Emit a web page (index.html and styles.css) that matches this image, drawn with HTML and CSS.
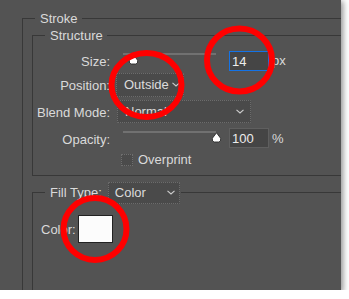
FILE: index.html
```html
<!DOCTYPE html>
<html>
<head>
<meta charset="utf-8">
<link rel="stylesheet" href="styles.css">
</head>
<body>
<div class="panel">
  <fieldset class="group stroke">
    <legend>Stroke</legend>
    <fieldset class="group structure">
      <legend>Structure</legend>
      <div class="row row-size">
        <span class="label">Size:</span>
        <div class="controls">
          <div class="slider">
            <div class="track"></div>
            <svg class="thumb" style="left:5px" width="11" height="11" viewBox="0 0 11 11"><path d="M5.5 0.8 L9.6 6.2 Q10.4 10 7.6 10 L3.4 10 Q0.6 10 1.4 6.2 Z" fill="#fff" stroke="#2a2a2a" stroke-width="0.9"/></svg>
          </div>
          <div class="num focus">14</div>
          <span class="unit">px</span>
        </div>
      </div>
      <div class="row row-pos">
        <span class="label">Position:</span>
        <div class="controls">
          <div class="select sel-pos">Outside<svg class="chev" width="8" height="5" viewBox="0 0 8 5"><path d="M0.5 0.8 L4 4 L7.5 0.8" fill="none" stroke="#cfcfcf" stroke-width="1.1"/></svg></div>
        </div>
      </div>
      <div class="row row-blend">
        <span class="label">Blend Mode:</span>
        <div class="controls">
          <div class="select sel-blend">Normal<svg class="chev" width="8" height="5" viewBox="0 0 8 5"><path d="M0.5 0.8 L4 4 L7.5 0.8" fill="none" stroke="#cfcfcf" stroke-width="1.1"/></svg></div>
        </div>
      </div>
      <div class="row row-opacity">
        <span class="label">Opacity:</span>
        <div class="controls">
          <div class="slider">
            <div class="track"></div>
            <svg class="thumb" style="left:88px" width="11" height="11" viewBox="0 0 11 11"><path d="M5.5 0.8 L9.6 6.2 Q10.4 10 7.6 10 L3.4 10 Q0.6 10 1.4 6.2 Z" fill="#fff" stroke="#2a2a2a" stroke-width="0.9"/></svg>
          </div>
          <div class="num">100</div>
          <span class="unit">%</span>
        </div>
      </div>
      <div class="row row-over">
        <span class="label"></span>
        <div class="controls">
          <span class="check"></span>
          <span class="check-text">Overprint</span>
        </div>
      </div>
    </fieldset>
    <fieldset class="group fill">
      <legend class="fill-legend">
        <span>Fill Type:</span>
        <span class="select sel-fill">Color<svg class="chev" width="8" height="5" viewBox="0 0 8 5"><path d="M0.5 0.8 L4 4 L7.5 0.8" fill="none" stroke="#cfcfcf" stroke-width="1.1"/></svg></span>
      </legend>
      <div class="color-row">
        <span class="color-label">Color:</span>
        <span class="swatch"></span>
      </div>
    </fieldset>
  </fieldset>
  <svg class="annot" width="341" height="290" viewBox="0 0 341 290">
    <ellipse cx="146.5" cy="85" rx="35" ry="32" fill="none" stroke="#ff0000" stroke-width="6"/>
    <ellipse cx="239.5" cy="60" rx="32.5" ry="31.5" fill="none" stroke="#ff0000" stroke-width="6"/>
    <ellipse cx="95" cy="229" rx="31.5" ry="31" fill="none" stroke="#ff0000" stroke-width="6"/>
  </svg>
</div>
</body>
</html>
```

FILE: styles.css
```css
html, body {
  margin: 0;
  padding: 0;
  background: #ffffff;
}

.panel {
  position: relative;
  width: 341px;
  height: 290px;
  background: #535353;
  overflow: hidden;
  box-shadow: 1px 2px 6px 1px rgba(0, 0, 0, 0.45);
  font-family: "Liberation Sans", Arial, sans-serif;
  font-size: 13px;
  line-height: 15px;
  color: #dadada;
}

.group {
  border: 0;
  border-top: 1px solid #383838;
  border-left: 1px solid #383838;
  padding: 0;
  min-inline-size: 0;
}

.group > legend {
  margin-left: 12px;
  padding: 0 4px 0 5px;
  font-size: 13px;
  line-height: 15px;
}

.stroke {
  margin: 11.3px -20px 0 22px;
  padding-bottom: 0;
}

.structure {
  margin: 2.2px 0 0 9px;
  padding: 6.5px 0 8px 0;
  border-bottom: 1px solid #383838;
}

.row {
  display: flex;
  align-items: center;
}

.row-size { height: 22px; }
.row-pos { height: 24px; margin-top: 1px; }
.row-blend { height: 24px; margin-top: 3px; }
.row-opacity { height: 21px; margin-top: 4px; }
.row-over { height: 14px; margin-top: 4px; }

.label {
  width: 77px;
  flex: none;
  text-align: right;
  padding-top: 2px;
}

.controls {
  margin-left: 6px;
  display: flex;
  align-items: center;
  height: 100%;
}

.slider {
  position: relative;
  width: 93px;
  height: 100%;
  margin-left: 7px;
}

.track {
  margin-top: 3px;
  height: 2px;
  background: #717171;
}

.thumb {
  position: absolute;
  top: 4px;
  display: block;
}

.num {
  box-sizing: border-box;
  width: 40px;
  height: 20px;
  margin-left: 13px;
  padding: 2px 0 0 2px;
  background: #454545;
  border: 1px solid #5f5f5f;
  color: #ececec;
}

.num.focus {
  border-color: #1473e6;
}

.unit {
  margin-left: 3px;
}

.select {
  box-sizing: border-box;
  display: flex;
  align-items: center;
  justify-content: space-between;
  background: #4a4a4a;
  border: 1px dotted #6c6c6c;
  border-radius: 1px;
  color: #dcdcdc;
}

.sel-pos {
  width: 68px;
  height: 24px;
  padding: 0 3px 0 7px;
}

.sel-blend {
  width: 134px;
  height: 23px;
  margin-left: 1px;
  padding: 0 6px 0 7px;
}

.chev {
  display: block;
  flex: none;
}

.check {
  box-sizing: border-box;
  width: 12px;
  height: 12px;
  margin-left: 5px;
  background: #4b4b4b;
  border: 1px dotted #6e6e6e;
}

.check-text {
  margin-left: 5px;
}

.fill {
  margin: 6px 0 0 9px;
  padding: 11px 0 60px 0;
}

.fill-legend {
  display: flex;
  align-items: center;
  padding-right: 1px !important;
}

.sel-fill {
  width: 72px;
  height: 22px;
  margin-left: 6px;
  padding: 0 4px 0 6px;
}

.color-row {
  display: flex;
  align-items: center;
  height: 28px;
  margin-left: 8px;
}

.color-label {
  padding-top: 2px;
}

.swatch {
  box-sizing: border-box;
  width: 35px;
  height: 28px;
  margin-left: 2px;
  background: #fcfcfc;
  border: 1px solid #222222;
}

.annot {
  position: absolute;
  top: 0;
  left: 0;
  pointer-events: none;
}
```
